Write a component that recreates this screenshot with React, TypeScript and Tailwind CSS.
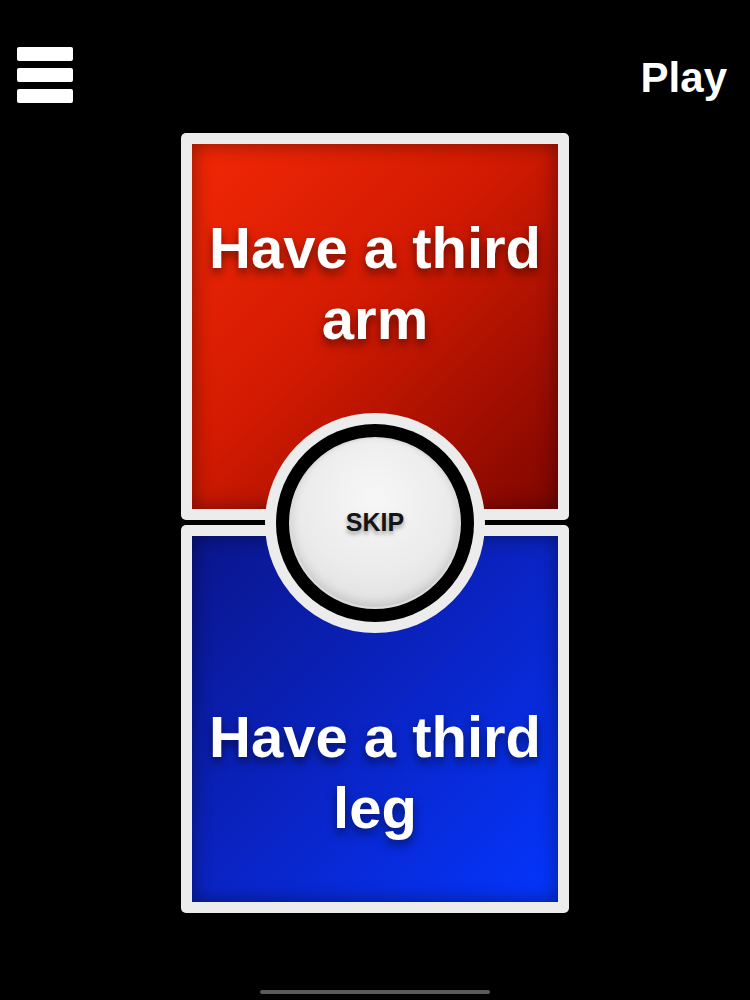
import React from 'react';

type ChoiceProps = {
  text: string;
  tone: 'red' | 'blue';
};

function ChoiceCard({ text, tone }: ChoiceProps) {
  const isRed = tone === 'red';

  return (
    <div
      className={`${isRed ? 'h-[387px]' : 'h-[388px]'} rounded-[5px] bg-[#ececec] p-[11px]`}
    >
      <div
        className={`flex h-full items-center justify-center px-2 text-center ${
          isRed
            ? 'pb-[88px] bg-[linear-gradient(135deg,#f22806_0%,#d21a02_45%,#7e0600_100%)]'
            : 'pt-[105px] bg-[linear-gradient(135deg,#0a168c_0%,#0a24c4_50%,#0436ff_100%)]'
        } shadow-[inset_0_0_20px_rgba(0,0,0,0.45)]`}
      >
        <p className="text-[58px] font-bold leading-[71px] text-white [text-shadow:0_5px_10px_rgba(0,0,0,0.5)]">
          {text}
        </p>
      </div>
    </div>
  );
}

function SkipButton() {
  return (
    <button
      type="button"
      className="absolute left-[84px] top-[280px] flex h-[220px] w-[220px] items-center justify-center rounded-full bg-[#ececec]"
    >
      <span className="flex h-[198px] w-[198px] items-center justify-center rounded-full bg-black">
        <span className="flex h-[172px] w-[172px] items-center justify-center rounded-full border-2 border-[#dcdcdc] bg-[radial-gradient(circle_at_50%_35%,#f7f7f7_0%,#ebebeb_55%,#d8d8d8_100%)] shadow-[inset_0_-4px_10px_rgba(0,0,0,0.12)]">
          <span className="text-[25px] font-bold text-[#141414] [text-shadow:0_3px_4px_rgba(0,0,0,0.35)]">
            SKIP
          </span>
        </span>
      </span>
    </button>
  );
}

export default function App() {
  return (
    <div className="h-[1000px] w-full overflow-hidden bg-black font-['Liberation_Sans',Arial,sans-serif]">
      {/* Top bar */}
      <header className="flex items-start justify-between pl-[17px] pr-[23px] pt-[47px]">
        <button type="button" className="flex w-[56px] flex-col gap-[7px]">
          <span className="h-[14px] w-full rounded-[2px] bg-white" />
          <span className="h-[14px] w-full rounded-[2px] bg-white" />
          <span className="h-[14px] w-full rounded-[2px] bg-white" />
        </button>
        <span className="mt-[10px] text-[42px] font-bold leading-none text-white">Play</span>
      </header>

      {/* Question cards */}
      <div className="relative mx-auto mt-[30px] flex w-[388px] flex-col gap-[5px]">
        <ChoiceCard tone="red" text="Have a third arm" />
        <ChoiceCard tone="blue" text="Have a third leg" />
        <SkipButton />
      </div>

      {/* Home indicator */}
      <div className="mx-auto mt-[77px] h-[4px] w-[230px] rounded-full bg-[#5a5a5a]" />
    </div>
  );
}
